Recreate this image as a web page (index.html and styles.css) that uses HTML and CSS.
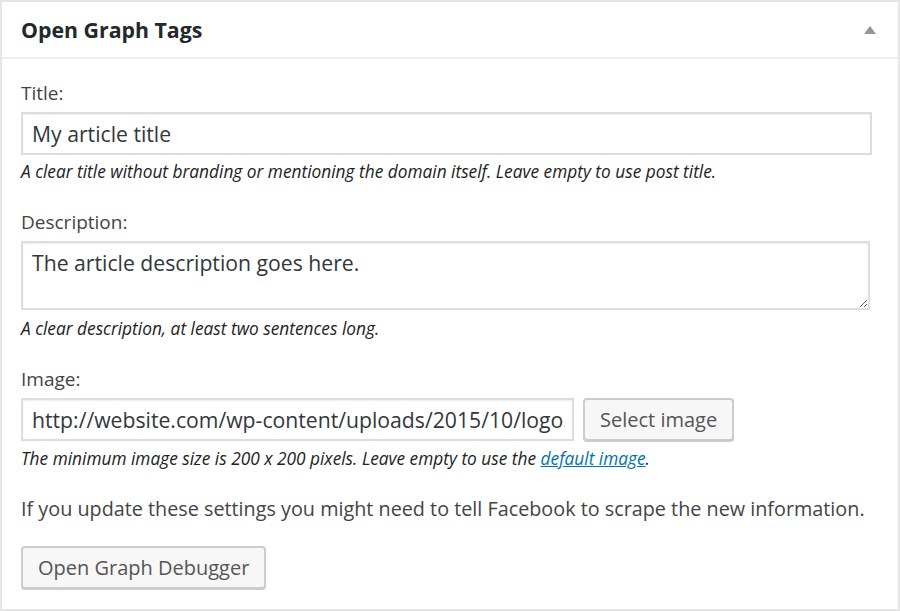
FILE: index.html
```html
<!DOCTYPE html>
<html>
<head>
<meta charset="utf-8">
<link rel="stylesheet" href="styles.css">
</head>
<body>
<div class="box">
  <div class="head">
    <h2 class="head-title">Open Graph Tags</h2>
    <span class="toggle"></span>
  </div>
  <div class="inside">
    <div class="field">
      <label class="label">Title:</label>
      <input class="input input-full" type="text" value="My article title">
      <p class="help">A clear title without branding or mentioning the domain itself. Leave empty to use post title.</p>
    </div>
    <div class="field">
      <label class="label">Description:</label>
      <textarea class="input textarea">The article description goes here.</textarea>
      <p class="help help-after-area">A clear description, at least two sentences long.</p>
    </div>
    <div class="field field-last">
      <label class="label">Image:</label>
      <div class="image-row">
        <input class="input input-url" type="text" value="http://website.com/wp-content/uploads/2015/10/logo.png">
        <button class="button">Select image</button>
      </div>
      <p class="help help-image">The minimum image size is 200 x 200 pixels. Leave empty to use the <a href="#" class="link">default image</a>.</p>
    </div>
    <p class="note">If you update these settings you might need to tell Facebook to scrape the new information.</p>
    <button class="button">Open Graph Debugger</button>
  </div>
</div>
</body>
</html>
```

FILE: styles.css
```css
* { box-sizing: border-box; }
html, body { margin: 0; padding: 0; background: #fff; }
body { font-family: "Open Sans", "Noto Sans", sans-serif; color: #444; }
.box {
  width: 900px;
  height: 611px;
  border: 2px solid #e5e5e5;
  background: #fff;
}
.head {
  height: 57px;
  border-bottom: 2px solid #eeeeee;
  display: flex;
  align-items: center;
  justify-content: space-between;
  padding: 0 22px 0 19px;
}
.head-title {
  margin: 0;
  font-size: 21.3px;
  font-weight: 700;
  color: #23282d;
}
.toggle {
  width: 0; height: 0;
  border-left: 6px solid transparent;
  border-right: 6px solid transparent;
  border-bottom: 8px solid #8f969c;
}
.inside { padding: 22px 20px 0 19px; }
.field { margin-bottom: 27px; }
.field-last { margin-bottom: 25px; }
.label {
  display: block;
  font-size: 19px;
  line-height: 24px;
  color: #444;
  margin-bottom: 7px;
}
.input {
  display: block;
  font-family: inherit;
  font-size: 21.2px;
  color: #32373c;
  border: 2px solid #dddddd;
  box-shadow: inset 0 1px 2px rgba(0,0,0,0.07);
  background: #fff;
  padding: 0 9px;
  margin: 0;
  outline: none;
}
.input-full { width: 851px; height: 43px; }
.textarea { width: 849px; height: 69px; padding: 6px 9px; resize: vertical; line-height: 28px; }
.image-row { display: flex; gap: 9px; align-items: center; }
.input-url { width: 553px; height: 43px; padding-right: 7px; }
.help {
  margin: 6px 0 0;
  font-size: 17.3px;
  line-height: 22px;
  font-style: italic;
  color: #222;
}
.help-after-area { margin-top: 8px; }
.help-image { margin-top: 7px; }
.link { color: #0073aa; }
.note {
  margin: 0 0 23px;
  font-size: 19.8px;
  line-height: 28px;
  color: #444;
  white-space: nowrap;
}
.button {
  font-family: inherit;
  font-size: 20px;
  color: #555;
  background: #f7f7f7;
  border: 2px solid #cccccc;
  border-radius: 4px;
  box-shadow: 0 1px 0 #cccccc;
  height: 43px;
  padding: 0 15px;
  margin: 0;
}
```
